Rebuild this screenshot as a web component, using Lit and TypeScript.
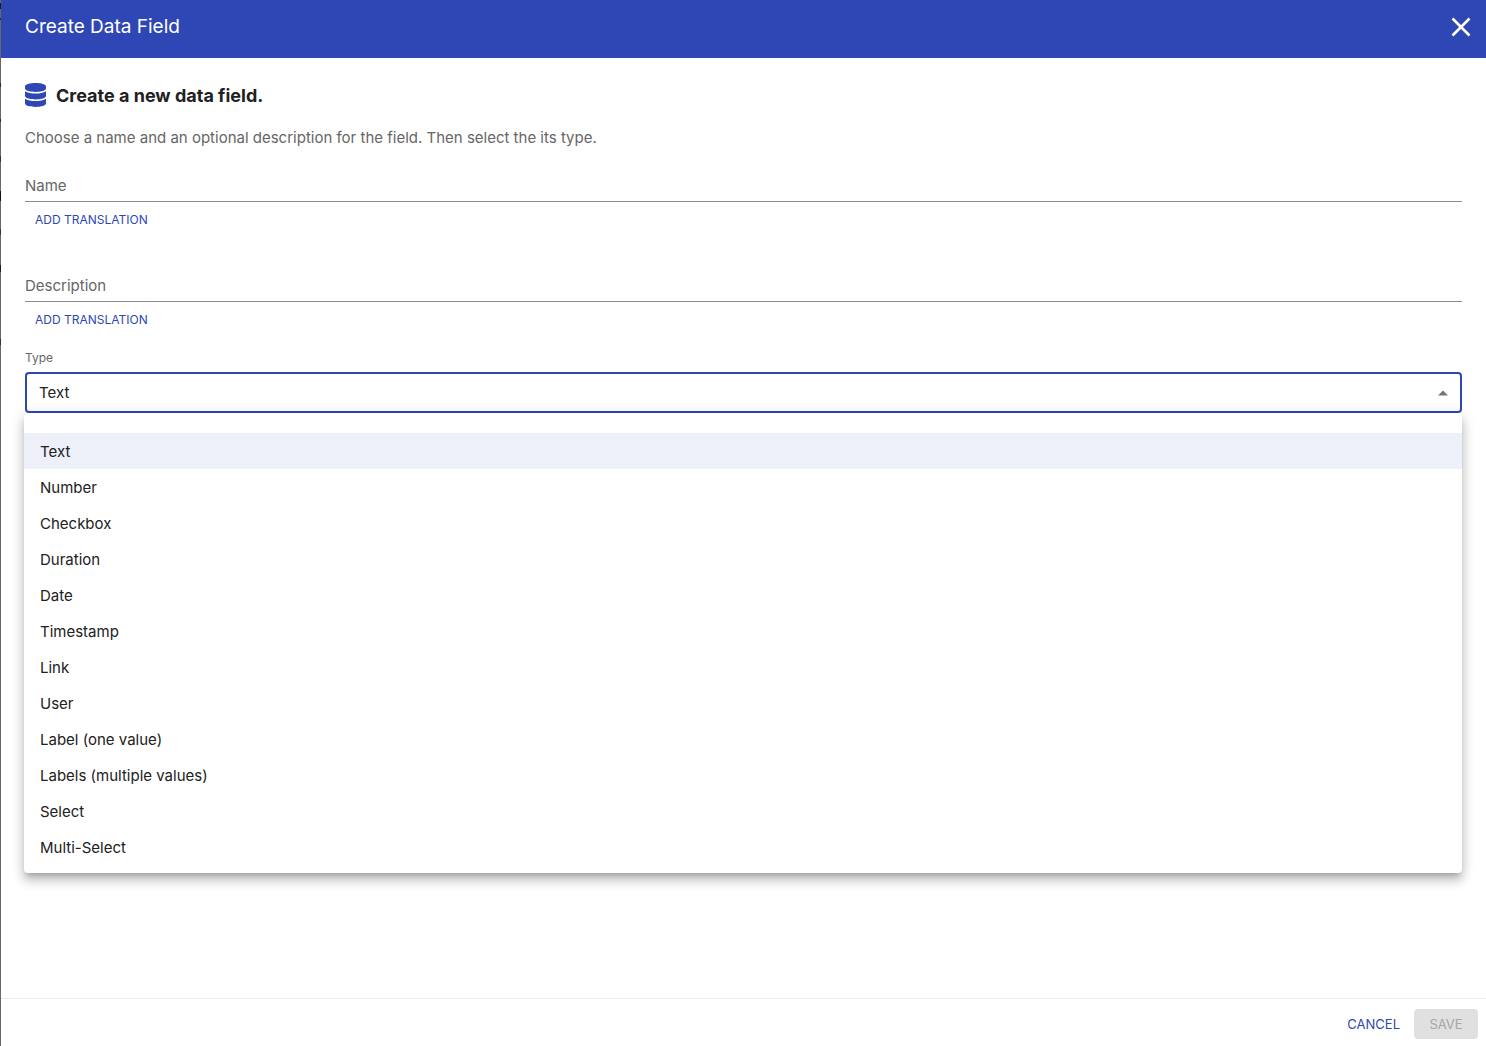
import { LitElement, html, css, svg } from "lit";
import { customElement, state } from "lit/decorators.js";

const FIELD_TYPES = [
  "Text",
  "Number",
  "Checkbox",
  "Duration",
  "Date",
  "Timestamp",
  "Link",
  "User",
  "Label (one value)",
  "Labels (multiple values)",
  "Select",
  "Multi-Select",
];

const databaseIcon = svg`
  <svg class="db" viewBox="0 0 448 512" preserveAspectRatio="none" fill="currentColor" aria-hidden="true">
    <path d="M448 73.1v45.8C448 159.1 347.7 192 224 192S0 159.1 0 118.9V73.1C0 32.9 100.3 0 224 0s224 32.9 224 73.1zM448 176v102.9C448 319.1 347.7 352 224 352S0 319.1 0 278.9V176c48.1 33.1 136.2 48.6 224 48.6S399.900 209.100 448 176zm0 160v102.900C448 479.100 347.700 512 224 512S0 479.100 0 438.900V336c48.100 33.100 136.200 48.600 224 48.600S399.900 369.100 448 336z"/>
  </svg>`;

@customElement("app-root")
export class AppRoot extends LitElement {
  @state() private type = "Text";
  @state() private open = true;

  static styles = css`
    :host {
      display: block;
      font-family: Inter, "Liberation Sans", sans-serif;
      font-size: 15px;
      line-height: 24px;
      color: #212121;
    }
    * {
      box-sizing: border-box;
    }
    button,
    input,
    select {
      font: inherit;
      color: inherit;
      margin: 0;
      padding: 0;
      border: 0;
      background: none;
      outline: none;
      appearance: none;
    }
    button {
      cursor: pointer;
    }
    /* The dimmed page behind the dialog shows as a thin strip on the left. */
    .backdrop {
      padding-left: 1px;
      background: linear-gradient(
        #68686a 3px, #1c1c1c 3px 9px, #68686a 9px 18px, #1d2750 18px 20px,
        #68686a 20px 83px, #2a2a2a 83px 87px, #68686a 87px 119px,
        #2a2a2a 119px 122px, #68686a 122px 156px, #333 156px 162px,
        #68686a 162px 191px, #111 191px 201px, #68686a 201px 229px,
        #333 229px 235px, #68686a 235px 265px, #1c1c1c 265px 272px,
        #68686a 272px 339px, #333 339px 345px, #68686a 345px
      );
    }
    .dialog {
      display: flex;
      flex-direction: column;
      min-height: 100vh;
      background: #fff;
    }
    .header {
      display: flex;
      align-items: center;
      justify-content: space-between;
      padding: 11px 11px 15px 24px;
      background: #2f47b5;
      color: #fff;
    }
    .title {
      margin: 0;
      font-size: 19px;
      line-height: 32px;
      font-weight: 400;
    }
    .close {
      display: flex;
    }
    .close svg {
      width: 28px;
      height: 28px;
    }
    .body {
      flex: 1;
      display: flex;
      flex-direction: column;
      padding: 24px;
    }
    .heading {
      display: flex;
      align-items: center;
      gap: 10px;
      margin: 0;
      font-size: 18px;
      line-height: 28px;
      font-weight: 700;
    }
    .db {
      width: 21px;
      height: 24px;
      margin-bottom: 2px;
      color: #2f47b5;
    }
    .intro {
      margin: 16px 0 24px;
      color: #666;
    }
    .field {
      display: flex;
      flex-direction: column;
      align-items: flex-start;
      margin-bottom: 36px;
    }
    .field.last {
      margin-bottom: 10px;
    }
    .line {
      display: grid;
      width: 100%;
      border-bottom: 1px solid #8c8c8c;
    }
    .line label,
    .line input {
      grid-area: 1 / 1;
      height: 27px;
    }
    .line label {
      color: #666;
    }
    .line:focus-within label,
    .line input:not(:placeholder-shown) + label {
      visibility: hidden;
    }
    .add {
      padding: 6px 10px;
      font-size: 12px;
      line-height: 24px;
      text-transform: uppercase;
      color: #2f47b5;
    }
    .caption {
      font-size: 12px;
      line-height: 20px;
      margin-bottom: 4px;
      color: #666;
    }
    .picker {
      position: relative;
      display: grid;
      align-items: center;
    }
    .picker select {
      grid-area: 1 / 1;
      height: 41px;
      padding: 0 32px 0 12px;
      border: 2px solid #2f47b5;
      border-radius: 4px;
    }
    .arrow {
      grid-area: 1 / 1;
      justify-self: end;
      width: 24px;
      height: 24px;
      margin-right: 7px;
      color: #757575;
      pointer-events: none;
    }
    .menu {
      position: absolute;
      top: 100%;
      left: -1px;
      right: 0;
      display: flex;
      flex-direction: column;
      padding: 20px 0 8px;
      border-radius: 4px;
      background: #fff;
      box-shadow:
        0 5px 5px -3px rgba(0, 0, 0, 0.2),
        0 8px 10px 1px rgba(0, 0, 0, 0.14),
        0 3px 14px 2px rgba(0, 0, 0, 0.12);
    }
    .option {
      padding: 7px 16px 5px;
      text-align: left;
    }
    .option:hover {
      background: #f5f5f5;
    }
    .option.selected {
      background: #edf0f8;
    }
    .footer {
      display: flex;
      justify-content: flex-end;
      gap: 6px;
      padding: 10px 8px 7px;
      border-top: 1px solid #ebebeb;
    }
    .action {
      min-width: 64px;
      padding: 4px 8px;
      border-radius: 4px;
      font-size: 13px;
      line-height: 22px;
      text-transform: uppercase;
      color: #2f47b5;
    }
    .action:disabled {
      background: #e0e0e0;
      color: #a6a6a6;
      cursor: default;
    }
  `;

  private toggle(e: Event) {
    e.preventDefault();
    this.open = !this.open;
  }

  private choose(type: string) {
    this.type = type;
    this.open = false;
  }

  private textField(id: string, label: string, last = false) {
    return html`
      <div class="field ${last ? "last" : ""}">
        <div class="line">
          <input id=${id} type="text" placeholder=" " />
          <label for=${id}>${label}</label>
        </div>
        <button class="add" type="button">Add translation</button>
      </div>
    `;
  }

  render() {
    return html`
      <div class="backdrop">
      <main class="dialog">
        <header class="header">
          <h1 class="title">Create Data Field</h1>
          <button class="close" type="button" aria-label="Close">
            <svg viewBox="0 0 28 28" fill="none" stroke="currentColor" stroke-width="2.6">
              <path d="M5.500 5.500 22.500 22.500M22.500 5.500 5.500 22.500" />
            </svg>
          </button>
        </header>
        <section class="body">
          <h2 class="heading">${databaseIcon}Create a new data field.</h2>
          <p class="intro">
            Choose a name and an optional description for the field. Then select the its type.
          </p>
          ${this.textField("name", "Name")}
          ${this.textField("description", "Description", true)}
          <label class="caption" for="type">Type</label>
          <div class="picker">
            <select id="type" .value=${this.type} @mousedown=${this.toggle}>
              ${FIELD_TYPES.map(
                (t) => html`<option ?selected=${t === this.type}>${t}</option>`,
              )}
            </select>
            <svg class="arrow" viewBox="0 0 24 24" fill="currentColor" aria-hidden="true">
              <path d="M7 14.500 12 9.500l5 5z" />
            </svg>
            ${this.open
              ? html`<div class="menu" role="listbox" aria-label="Type">
                  ${FIELD_TYPES.map(
                    (t) => html`<button
                      class="option ${t === this.type ? "selected" : ""}"
                      type="button"
                      role="option"
                      aria-selected=${t === this.type}
                      @click=${() => this.choose(t)}
                    >${t}</button>`,
                  )}
                </div>`
              : null}
          </div>
        </section>
        <footer class="footer">
          <button class="action" type="button">Cancel</button>
          <button class="action" type="button" disabled>Save</button>
        </footer>
      </main>
      </div>
    `;
  }
}
